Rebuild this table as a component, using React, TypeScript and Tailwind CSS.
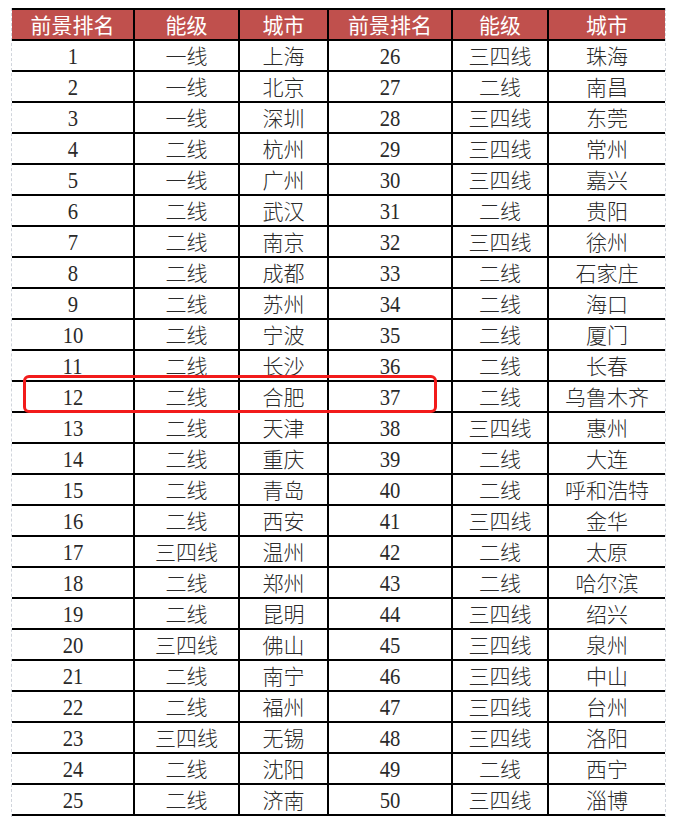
const rows: [number, string, string, number, string, string][] = [
  [1, "一线", "上海", 26, "三四线", "珠海"],
  [2, "一线", "北京", 27, "二线", "南昌"],
  [3, "一线", "深圳", 28, "三四线", "东莞"],
  [4, "二线", "杭州", 29, "三四线", "常州"],
  [5, "一线", "广州", 30, "三四线", "嘉兴"],
  [6, "二线", "武汉", 31, "二线", "贵阳"],
  [7, "二线", "南京", 32, "三四线", "徐州"],
  [8, "二线", "成都", 33, "二线", "石家庄"],
  [9, "二线", "苏州", 34, "二线", "海口"],
  [10, "二线", "宁波", 35, "二线", "厦门"],
  [11, "二线", "长沙", 36, "二线", "长春"],
  [12, "二线", "合肥", 37, "二线", "乌鲁木齐"],
  [13, "二线", "天津", 38, "三四线", "惠州"],
  [14, "二线", "重庆", 39, "二线", "大连"],
  [15, "二线", "青岛", 40, "二线", "呼和浩特"],
  [16, "二线", "西安", 41, "三四线", "金华"],
  [17, "三四线", "温州", 42, "二线", "太原"],
  [18, "二线", "郑州", 43, "二线", "哈尔滨"],
  [19, "二线", "昆明", 44, "三四线", "绍兴"],
  [20, "三四线", "佛山", 45, "三四线", "泉州"],
  [21, "二线", "南宁", 46, "三四线", "中山"],
  [22, "二线", "福州", 47, "三四线", "台州"],
  [23, "三四线", "无锡", 48, "三四线", "洛阳"],
  [24, "二线", "沈阳", 49, "二线", "西宁"],
  [25, "二线", "济南", 50, "三四线", "淄博"],
];

const widths = ["w-[121px]", "w-[105px]", "w-[89px]", "w-[124px]", "w-[96px]", "w-[118px]"];
const headers = ["前景排名", "能级", "城市", "前景排名", "能级", "城市"];

const num = "font-['Liberation_Serif',serif] text-[24px]";
const cjk = "font-['Noto_Sans_CJK_SC',sans-serif] font-light text-[21px]";

function Cell({ i, className = "", children }: { i: number; className?: string; children: React.ReactNode }) {
  return (
    <div
      className={`${widths[i]} ${i > 0 ? "border-l-2 border-black" : ""} flex items-center justify-center leading-none ${className}`}
    >
      {children}
    </div>
  );
}

// numbers in the sheet are narrow and tall
function Num({ n }: { n: number }) {
  return <span className="inline-block scale-x-[0.86] pt-[1px]">{n}</span>;
}

export default function App() {
  return (
    <div className="relative w-[676px] h-[825px] bg-white pt-[8px] pl-[11px]">
      <div className="w-[655px] border-x border-dashed border-gray-300 pb-[1px]">
        <div className="flex h-[33px] border-y-2 border-black bg-[#c0504d] text-white">
          {headers.map((h, i) => (
            <Cell key={i} i={i} className="font-['Noto_Sans_CJK_SC',sans-serif] text-[21px]">
              {h}
            </Cell>
          ))}
        </div>
        {rows.map((r) => (
          <div key={r[0]} className="flex h-[31px] border-b-2 border-black text-[#2a2a2a]">
            <Cell i={0} className={num}><Num n={r[0]} /></Cell>
            <Cell i={1} className={cjk}>{r[1]}</Cell>
            <Cell i={2} className={cjk}>{r[2]}</Cell>
            <Cell i={3} className={num}><Num n={r[3]} /></Cell>
            <Cell i={4} className={cjk}>{r[4]}</Cell>
            <Cell i={5} className={cjk}>{r[5]}</Cell>
          </div>
        ))}
      </div>
      <div className="absolute left-[23px] top-[375px] w-[414px] h-[38px] rounded-[6px] border-[3px] border-[#f21b1b]" />
    </div>
  );
}
